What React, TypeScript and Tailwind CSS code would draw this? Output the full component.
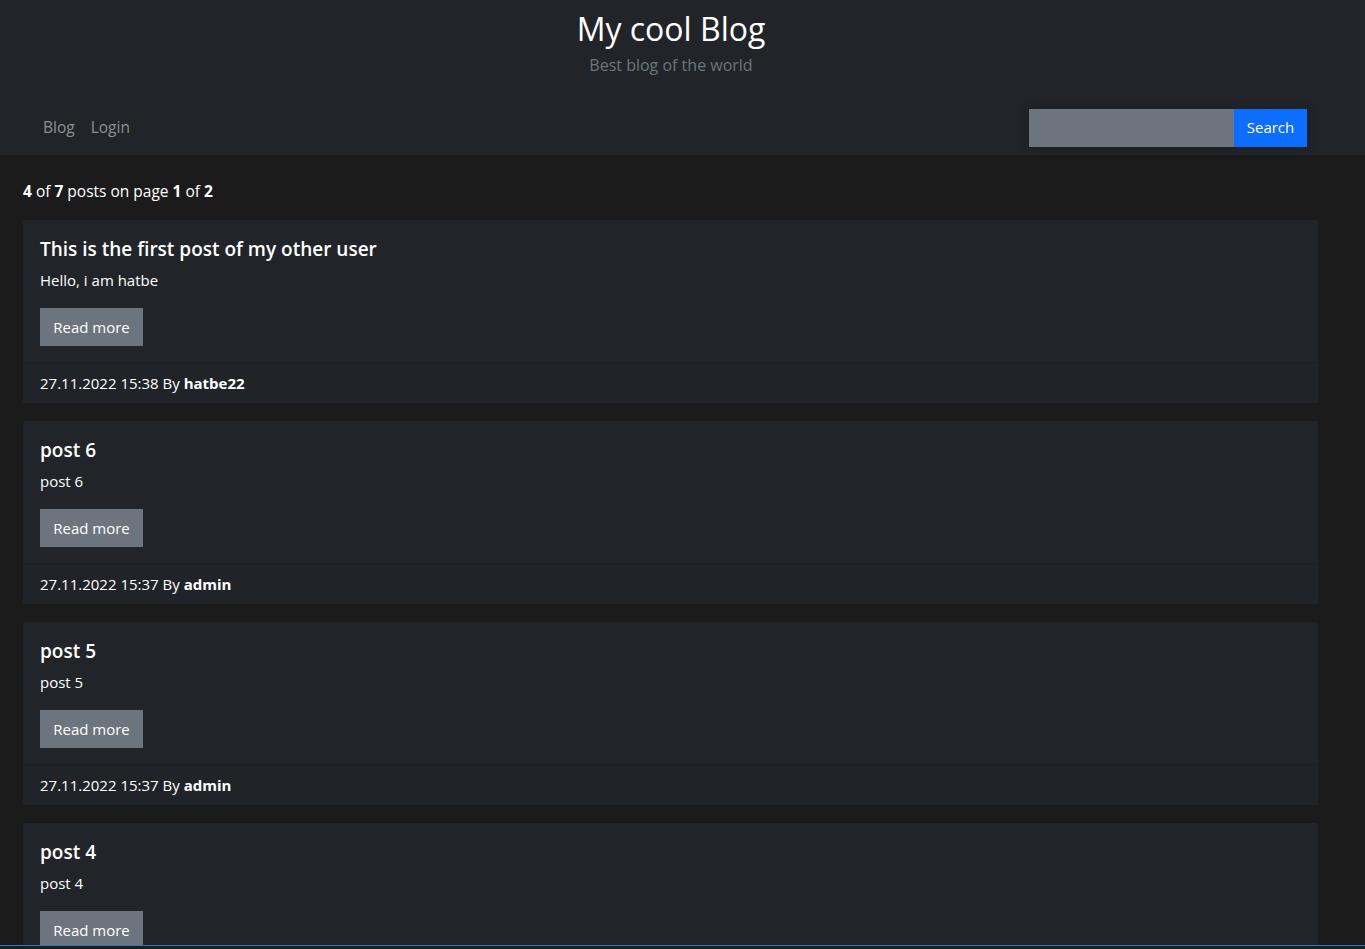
import React from "react";

type Post = {
  title: string;
  body: string;
  date: string;
  author: string;
};

const posts: Post[] = [
  {
    title: "This is the first post of my other user",
    body: "Hello, i am hatbe",
    date: "27.11.2022 15:38",
    author: "hatbe22",
  },
  { title: "post 6", body: "post 6", date: "27.11.2022 15:37", author: "admin" },
  { title: "post 5", body: "post 5", date: "27.11.2022 15:37", author: "admin" },
  { title: "post 4", body: "post 4", date: "27.11.2022 15:37", author: "admin" },
];

const PostCard = ({ post }: { post: Post }) => {
  return (
    <div className="bg-[#212529] rounded-[3px] mb-[18px]">
      <div className="px-[17px] pt-[17px] pb-4">
        <h5 className="text-[19px] leading-[24px] font-semibold mb-[7px]">{post.title}</h5>
        <p className="text-[15px] leading-[24px] mb-4">{post.body}</p>
        <button className="h-[38px] w-[103px] bg-[#6c757d] text-[15px] text-white">
          Read more
        </button>
      </div>
      <div className="border-t border-[#1c1f23] bg-[#202328] px-[17px] py-2 text-[15px] leading-[24px]">
        {post.date} By <b>{post.author}</b>
      </div>
    </div>
  );
};

const App = () => {
  return (
    <div
      className="min-h-screen bg-[#1b1b1c] text-white"
      style={{ fontFamily: '"Open Sans", "Noto Sans", sans-serif' }}
    >
      <header className="bg-[#212529] h-[155px]">
        <div className="text-center pt-[10px] pr-[23px]">
          <h2 className="text-[32px] leading-[38px] font-medium">My cool Blog</h2>
          <p className="text-[16px] leading-[24px] text-[#6c757d] mt-[5px]">
            Best blog of the world
          </p>
        </div>
        <nav className="flex items-center justify-between pl-[35px] pr-[58px] mt-[31px]">
          <div className="flex text-[15.5px] text-[#8c9196]">
            <a className="px-2 py-2">Blog</a>
            <a className="px-2 py-2">Login</a>
          </div>
          <div className="flex shadow-[0_0_10px_rgba(0,0,0,0.25)]">
            <input className="w-[205px] h-[38px] bg-[#6c757d] outline-none" />
            <button className="h-[38px] w-[73px] bg-[#0d6efd] text-[15px] text-white">
              Search
            </button>
          </div>
        </nav>
      </header>

      <main className="pt-6 pl-[23px] pr-[47px]">
        <p className="text-[15.5px] leading-[24px] mb-[17px]">
          <b>4</b> of <b>7</b> posts on page <b>1</b> of <b>2</b>
        </p>
        {posts.map((post, i) => (
          <PostCard key={i} post={post} />
        ))}
      </main>

      <div className="fixed bottom-0 left-0 right-0 h-[4px] bg-[#1e1e1e] border-t border-[#2b79c2]" />
    </div>
  );
};

export default App;
